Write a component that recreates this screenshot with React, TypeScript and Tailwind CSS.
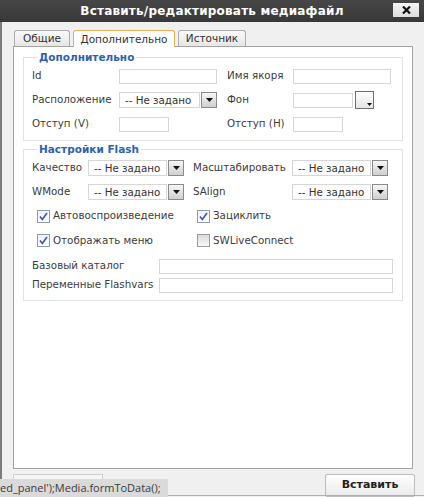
import React from 'react';

const font = { fontFamily: '"DejaVu Sans", Verdana, sans-serif' };

const Arrow = () => (
  <svg width="7" height="4" viewBox="0 0 7 4">
    <path d="M0 0h7L3.5 4z" fill="#111" />
  </svg>
);

const TextInput = ({ className = '' }: { className?: string }) => (
  <div className={`h-[15px] border border-[#d6d6d6] bg-white ${className}`} />
);

const Select = ({ boxWidth }: { boxWidth: string }) => (
  <div className="flex items-center h-[16px]">
    <div
      className={`${boxWidth} h-[16px] border border-[#d6d6d6] bg-white pl-[5px] text-[10.3px] leading-[14px] text-[#333] whitespace-nowrap overflow-hidden`}
    >
      -- Не задано
    </div>
    <div className="ml-px w-[16px] h-[16px] border border-[#8a8a8a] bg-gradient-to-b from-[#f6f6f6] to-[#cfcfcf] flex items-center justify-center">
      <Arrow />
    </div>
  </div>
);

const Checkbox = ({ checked }: { checked: boolean }) =>
  checked ? (
    <div className="w-[13px] h-[13px] border border-[#8e9cb4] bg-gradient-to-b from-[#eef1f6] to-white flex items-center justify-center">
      <svg width="9" height="9" viewBox="0 0 9 9">
        <path d="M1 4.5l2.3 3L8 1" stroke="#3a55a8" strokeWidth="1.6" fill="none" />
      </svg>
    </div>
  ) : (
    <div className="w-[13px] h-[13px] border border-[#9c9c9c] bg-gradient-to-b from-[#dcdcdc] to-[#f7f7f7]" />
  );

const Legend = ({ children }: { children: React.ReactNode }) => (
  <legend className="ml-[5px] px-[2px] text-[10.5px] leading-[13px] font-bold text-[#2f62ad]">{children}</legend>
);

export default function App() {
  return (
    <div className="relative w-[424px] h-[497px] overflow-hidden bg-[#f0f0f0] text-[#3c3c3c]" style={font}>
      {/* title bar */}
      <div className="relative h-[22px] bg-gradient-to-b from-[#474747] to-[#383838] flex items-center justify-center">
        <span className="text-white text-[12px] font-bold tracking-[0.2px]">Вставить/редактировать медиафайл</span>
        <div className="absolute right-[5px] top-[3px] w-[26px] h-[14px] bg-gradient-to-b from-[#f4f4f4] to-[#dcdcdc] flex items-center justify-center">
          <svg width="9" height="8" viewBox="0 0 9 8">
            <path d="M1 0.5l7 7M8 0.5l-7 7" stroke="#111" strokeWidth="2.2" />
          </svg>
        </div>
      </div>

      {/* body */}
      <div className="h-[475px] border-l-2 border-[#7c7c7c] flex flex-col">
        <div className="pt-[8px] pl-[12px] flex items-end gap-[3px] -mb-px relative z-10 text-[10.5px]">
          <div className="mb-px w-[56px] h-[16px] border border-b-0 border-[#adadad] rounded-t-[3px] bg-gradient-to-b from-[#fafafa] to-[#e6e6e6] leading-[15px] text-center text-[#333]">
            Общие
          </div>
          <div className="w-[102px] h-[17px] border border-b-0 border-[#e3b458] rounded-t-[3px] bg-white leading-[16px] text-center text-[#333]">
            Дополнительно
          </div>
          <div className="mb-px w-[68px] h-[16px] border border-b-0 border-[#adadad] rounded-t-[3px] bg-gradient-to-b from-[#fafafa] to-[#e6e6e6] leading-[15px] text-center text-[#333]">
            Источник
          </div>
        </div>

        <div className="ml-[11px] w-[400px] h-[425px] border border-[#a3a3a3] bg-white px-[9px] pt-[4px] text-[10.3px]">
          <fieldset className="border border-[#e2e2e2] px-[8px] pb-[4px]">
            <Legend>Дополнительно</Legend>
            <div className="flex items-center h-[24px]">
              <span className="w-[87px]">Id</span>
              <TextInput className="w-[98px]" />
              <span className="ml-[10px] w-[66px]">Имя якоря</span>
              <TextInput className="w-[98px]" />
            </div>
            <div className="flex items-center h-[24px]">
              <span className="w-[87px]">Расположение</span>
              <Select boxWidth="w-[81px]" />
              <span className="ml-[10px] w-[66px]">Фон</span>
              <TextInput className="w-[60px]" />
              <div className="relative ml-[2px] w-[19px] h-[18px] border border-[#707070] bg-gradient-to-b from-white to-[#e4e4e4]">
                <div className="absolute right-[1px] bottom-[2px]">
                  <svg width="5" height="3" viewBox="0 0 5 3">
                    <path d="M0 0h5L2.5 3z" fill="#111" />
                  </svg>
                </div>
              </div>
            </div>
            <div className="flex items-center h-[24px]">
              <span className="w-[87px]">Отступ (V)</span>
              <TextInput className="w-[50px]" />
              <span className="ml-[58px] w-[66px]">Отступ (H)</span>
              <TextInput className="w-[50px]" />
            </div>
          </fieldset>

          <fieldset className="mt-[2px] border border-[#e2e2e2] px-[8px] pb-[6px]">
            <Legend>Настройки Flash</Legend>
            <div className="flex items-center h-[24px]">
              <span className="w-[56px]">Качество</span>
              <Select boxWidth="w-[79px]" />
              <span className="ml-[9px] w-[99px] whitespace-nowrap">Масштабировать</span>
              <Select boxWidth="w-[79px]" />
            </div>
            <div className="flex items-center h-[24px]">
              <span className="w-[56px]">WMode</span>
              <Select boxWidth="w-[79px]" />
              <span className="ml-[9px] w-[99px]">SAlign</span>
              <Select boxWidth="w-[79px]" />
            </div>
            <div className="flex items-center h-[24px] pl-[5px]">
              <div className="w-[160px] flex items-center gap-[3px]">
                <Checkbox checked />
                <span>Автовоспроизведение</span>
              </div>
              <div className="flex items-center gap-[3px]">
                <Checkbox checked />
                <span>Зациклить</span>
              </div>
            </div>
            <div className="flex items-center h-[25px] pl-[5px]">
              <div className="w-[160px] flex items-center gap-[3px]">
                <Checkbox checked />
                <span>Отображать меню</span>
              </div>
              <div className="flex items-center gap-[3px]">
                <Checkbox checked={false} />
                <span>SWLiveConnect</span>
              </div>
            </div>
            <div className="mt-[4px] flex items-center h-[18px]">
              <span className="w-[127px]">Базовый каталог</span>
              <TextInput className="w-[234px]" />
            </div>
            <div className="mt-px flex items-center h-[18px]">
              <span className="w-[127px] whitespace-nowrap">Переменные Flashvars</span>
              <TextInput className="w-[234px]" />
            </div>
          </fieldset>
        </div>

        {/* footer */}
        <div className="flex justify-end pr-[9px] pt-[5px]">
          <div className="w-[90px] h-[23px] border border-[#bdbdbd] rounded-[2px] bg-gradient-to-b from-white to-[#e9e9e9] text-[11px] font-bold text-[#222] flex items-center justify-center">
            Вставить
          </div>
        </div>
      </div>

      {/* status tooltip over the footer */}
      <div className="absolute left-[13px] bottom-[17px] w-[90px] h-[6px] border border-b-0 border-[#cfcfcf] bg-[#f6f6f6]" />
      <div
        className="absolute left-0 bottom-0 w-[168px] h-[18px] bg-[#dadada] text-[11px] leading-[17px] text-[#3a3a3a] whitespace-nowrap overflow-hidden"
        style={{ fontFamily: '"Open Sans", "Liberation Sans", sans-serif' }}
      >
        ed_panel&#39;);Media.formToData();
      </div>
      <div className="absolute left-[168px] right-0 bottom-[1px] h-px bg-[#93b9c4]" />
    </div>
  );
}
